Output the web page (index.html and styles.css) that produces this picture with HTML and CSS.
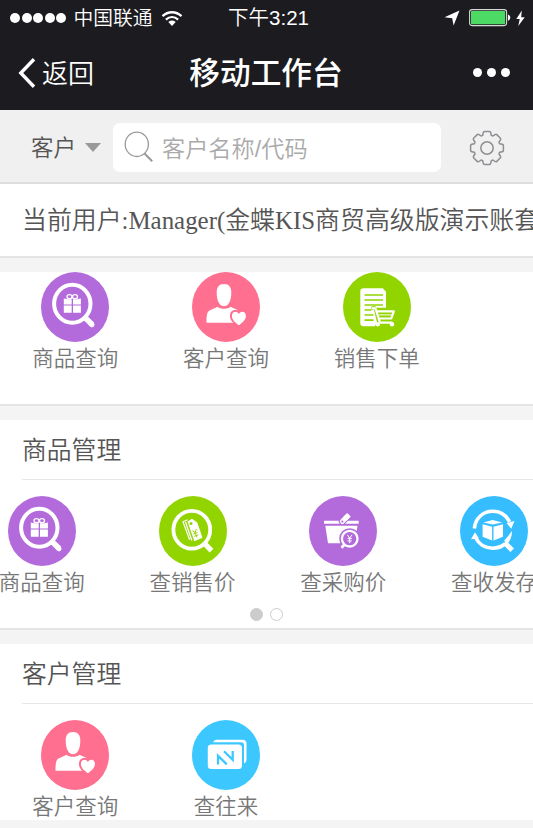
FILE: index.html
```
<!DOCTYPE html>
<html lang="zh-CN">
<head>
  <meta charset="UTF-8" />
  <meta name="viewport" content="width=device-width, initial-scale=1" />
  <title>移动工作台</title>
  <link rel="stylesheet" href="styles.css">
</head>
<body>
  <!-- Icon sprites -->
  <svg class="sprites" width="0" height="0">
    <symbol id="icon-goods" viewBox="0 0 68 70">
      <ellipse cx="34" cy="35" rx="34" ry="35" fill="#b36adb"/>
      <ellipse cx="31.3" cy="31.8" rx="18.2" ry="19" fill="none" stroke="#fff" stroke-width="4"/>
      <path d="M44 45.5l7.3 7.3" stroke="#fff" stroke-width="5.5"/>
      <path d="M50.5 52.2l.5.5" stroke="#fff" stroke-width="5" stroke-linecap="round"/>
      <path fill="#fff" d="M22.8 26.5l4 .7h3.9v5.2h-7.9zM32 27.2h4l3.9-.7v5.9H32zM22.8 33.4h7.9v7.4h-7.9zM32 33.4h7.9v7.4H32z"/>
      <g fill="none" stroke="#fff" stroke-width="1.3"><ellipse cx="28.5" cy="24.7" rx="2.5" ry="2"/><ellipse cx="34" cy="24.7" rx="2.5" ry="2"/></g>
    </symbol>
    <symbol id="icon-customer" viewBox="0 0 68 70">
      <ellipse cx="34" cy="35" rx="34" ry="35" fill="#ff6f8f"/>
      <path fill="#fff" d="M32 12c5 0 7.300 3.400 7.300 8.400 0 4.200-.6 8-2.600 11.200-1.200 2-2.700 2.700-4.700 2.700s-3.600-.7-4.700-2.700c-2-3.200-2.600-7-2.600-11.200C24.700 15.400 27 12 32 12z"/>
      <path fill="#fff" d="M14.500 50.800c0-7 .4-10.800 3-12.300 2.200-1.300 5-2 7.800-3.800 4 2.700 9.400 2.700 13.400 0 3 1.800 6 2.300 7.500 3.800v12.300z"/>
      <path fill="#fff" stroke="#ff6f8f" stroke-width="4" paint-order="stroke" d="M46.900 53.300c-4-2.800-7-5.600-7-9.200 0-4.800 5-5.600 7-2 2-3.600 7-2.800 7 2 0 3.600-3 6.400-7 9.200z"/>
    </symbol>
    <symbol id="icon-order" viewBox="0 0 68 70">
      <ellipse cx="34" cy="35" rx="34" ry="35" fill="#92d400"/>
      <path fill="#fff" d="M20.500 16.300h19.300l3.200 3.400v16H33.500l-1-1.500h-4v3.800h2.500l3 12-2 4.200H20.500q-3.200 0-3.200-3.200V19.500q0-3.200 3.200-3.200z"/>
      <path d="M21.500 23h18.500M21.500 28h18.500M21.500 33h18.500M21.500 38h7M21.500 43h9M21.500 48.200h9" stroke="#92d400" stroke-width="1.700"/>
      <path d="M29 36.300h3.500L37 50.600h12.500M34 39.300h16.800l-2.500 7.200H36" fill="none" stroke="#fff" stroke-width="2.200" stroke-linejoin="round"/>
      <path d="M36 42.900h13" stroke="#fff" stroke-width="1"/>
      <circle cx="34.700" cy="52.300" r="2.200" fill="#fff"/><circle cx="49" cy="52.300" r="2.200" fill="#fff"/>
    </symbol>
    <symbol id="icon-sale-price" viewBox="0 0 68 70">
      <ellipse cx="34" cy="35" rx="34" ry="35" fill="#92d400"/>
      <ellipse cx="32.800" cy="33.700" rx="18.400" ry="18.900" fill="none" stroke="#fff" stroke-width="3.800"/>
      <path d="M45.500 47.500l7 7.200" stroke="#fff" stroke-width="5.300"/>
      <path fill="#fff" d="M28.500 25.600l4.500-2.800 5.300 3.700 5.200 15.300-8.200 3.500z"/>
      <path d="M28.600 23.800l-4.600 2 6.600 18" fill="none" stroke="#fff" stroke-width="1.200"/>
      <path d="M26.500 26l6.300 18.500" stroke="#fff" stroke-width="1.300"/>
      <circle cx="32" cy="27.400" r="1.500" fill="#92d400"/>
      <path d="M33.300 34.600l2.900 2 1.100-3.500M36.200 36.600l1.800 4.900M34.400 38l4-1.400M35.200 40.300l4-1.400" fill="none" stroke="#92d400" stroke-width="1"/>
    </symbol>
    <symbol id="icon-buy-price" viewBox="0 0 68 70">
      <ellipse cx="34" cy="35" rx="34" ry="35" fill="#b36adb"/>
      <path fill="#fff" d="M15 24.700h34.700v3.100H15zM16.300 29.800h32.200l-1 6-8 8-7.500 3.500H19z"/>
      <path d="M33.300 25.500l6.300-6.500" stroke="#b36adb" stroke-width="7" stroke-linecap="round"/>
      <path d="M33.300 25.500l4.700-4.800" stroke="#fff" stroke-width="5" stroke-linecap="round"/>
      <path d="M36 22.800l4-4.100" stroke="#fff" stroke-width="5"/>
      <circle cx="33.300" cy="25.600" r="1.100" fill="#b36adb"/>
      <circle cx="40.700" cy="42.700" r="10.500" fill="#b36adb"/>
      <circle cx="40.700" cy="42.700" r="7.800" fill="none" stroke="#fff" stroke-width="2.300"/>
      <path d="M35.500 48.500l-3 3.200" stroke="#fff" stroke-width="2.800"/>
      <path d="M38.300 38.700l2.400 3.500 2.400-3.500M40.700 42v5.200M38.600 42.600h4.200M38.600 44.900h4.200" fill="none" stroke="#fff" stroke-width="1"/>
    </symbol>
    <symbol id="icon-stock" viewBox="0 0 68 70">
      <ellipse cx="34" cy="35" rx="34" ry="35" fill="#35bdff"/>
      <path d="M14.300 32.500C15.500 22 23 15.300 32.700 15.300c7.500 0 13.500 4 17 10.500M15.800 42c3 6.200 9.500 10.200 17 10.200 5 0 9-1.700 12-4.200" fill="none" stroke="#fff" stroke-width="3.600"/>
      <path fill="#fff" d="M46.500 27l8-2-3.300 7.800zM11 43.300l4-7 4 6.300zM51.800 35c.4 5.500-1.300 9.500-4.300 12.500l-3.500-2.700c3-3 5-6 7.800-9.800z"/>
      <path d="M44.500 46.500l7.700 7.700" stroke="#fff" stroke-width="5"/>
      <path fill="#fff" d="M23.300 26.400l9.400-2.500 9.600 2.500-9.600 2.200zM22.600 28.300l9.500 2.500v13.600l-9.500-3.700zM43 28.300l-9.500 2.500v13.600l9.500-3.700z"/>
    </symbol>
    <symbol id="icon-account" viewBox="0 0 68 70">
      <ellipse cx="34" cy="35" rx="34" ry="35" fill="#3cc8ff"/>
      <path fill="#fff" d="M21 22.300q1-2.600 3.500-2.600h26q4 0 4 4V40q0 2.500-2.500 3.500V25.300q0-3-3-3z"/>
      <rect x="15.800" y="24.600" width="34.200" height="24.500" rx="3.500" fill="#fff"/>
      <path d="M26 44.500v-8.700l8.800 8.500M32 31.300l8.700 8.500v-8.700" fill="none" stroke="#3cc8ff" stroke-width="2.300"/>
    </symbol>
  </svg>

  <header>
    <div class="status-bar">
      <div class="carrier">
        <span class="signal"><i></i><i></i><i></i><i></i><i></i></span>
        <span>中国联通</span>
        <svg class="wifi" width="22" height="17" viewBox="0 0 22 17" fill="none" stroke="#fff" stroke-width="2.300">
          <path d="M1.500 6.200c5.500-5.300 13.500-5.300 19 0M4.900 9.700c3.700-3.400 8.500-3.400 12.200 0"/>
          <path d="M7.300 12c2.300-1.900 5.100-1.900 7.400 0L11 16z" fill="#fff" stroke="none"/>
        </svg>
      </div>
      <div class="time">下午3:21</div>
      <div class="power">
        <svg width="16" height="16" viewBox="0 0 16 16"><path fill="#fff" d="M15.500.5L9.600 15.500 8.200 8.200.5 7.200z"/></svg>
        <svg class="battery" width="42" height="18" viewBox="0 0 42 18">
          <rect x=".6" y=".6" width="37" height="16" rx="2.500" fill="none" stroke="#d8d8d8" stroke-width="1.100"/>
          <rect x="2" y="2" width="34.200" height="13.200" rx="1" fill="#4cd964"/>
          <path d="M39 5.500q2.300.8 2.300 3.100T39 11.700z" fill="#fff"/>
        </svg>
        <svg width="9" height="17" viewBox="0 0 9 17"><path fill="#fff" d="M5.800.5L.3 9h3.400L2.300 16 8.700 7.200H5.200z"/></svg>
      </div>
    </div>
    <div class="nav-bar">
      <a class="back">
        <svg width="18" height="32" viewBox="0 0 18 32"><path d="M16 2.200L2.800 16 16 29.800" fill="none" stroke="#fff" stroke-width="3.400"/></svg>
        <span>返回</span>
      </a>
      <h1>移动工作台</h1>
      <span class="more"><i></i><i></i><i></i></span>
    </div>
  </header>

  <div class="search-bar">
    <div class="search-type">客户 <span class="caret"></span></div>
    <div class="search-box">
      <svg width="30" height="32" viewBox="0 0 30 32" fill="none" stroke="#999">
        <ellipse cx="12.800" cy="13.300" rx="11.600" ry="12.200" stroke-width="1.300"/>
        <path d="M20.500 22.500l7.700 7.700" stroke-width="2"/>
      </svg>
      <span>客户名称/代码</span>
    </div>
    <svg class="gear" width="36" height="36" viewBox="-18 -18 36 36" fill="none" stroke="#8e8e93" stroke-width="1.500" stroke-linejoin="round">
      <path d="M-4.300-12.600Q-3.900-16.400-2.500-16.400H2.500Q3.900-16.400 4.300-12.600L5.900-12Q8.800-14.400 9.800-13.400L13.400-9.800Q14.400-8.800 12-5.900L12.600-4.300Q16.400-3.900 16.400-2.500V2.500Q16.400 3.900 12.600 4.300L12 5.900Q14.400 8.800 13.400 9.800L9.800 13.400Q8.800 14.400 5.900 12L4.300 12.600Q3.900 16.400 2.500 16.400H-2.500Q-3.900 16.400-4.300 12.600L-5.900 12Q-8.800 14.400-9.800 13.400L-13.400 9.800Q-14.400 8.800-12 5.900L-12.600 4.300Q-16.400 3.900-16.400 2.500V-2.500Q-16.400-3.900-12.600-4.300L-12-5.900Q-14.400-8.800-13.400-9.800L-9.800-13.400Q-8.800-14.400-5.900-12z"/>
      <circle r="6.200"/>
    </svg>
  </div>

  <div class="user">当前用户:Manager(金蝶KIS商贸高级版演示账套)</div>

  <section class="card quick">
    <div class="items">
      <div class="item"><svg><use href="#icon-goods"/></svg><span>商品查询</span></div>
      <div class="item"><svg><use href="#icon-customer"/></svg><span>客户查询</span></div>
      <div class="item"><svg><use href="#icon-order"/></svg><span>销售下单</span></div>
    </div>
  </section>

  <section class="card goods">
    <h2>商品管理</h2>
    <div class="items scrolled">
      <div class="item"><svg><use href="#icon-goods"/></svg><span>商品查询</span></div>
      <div class="item"><svg><use href="#icon-sale-price"/></svg><span>查销售价</span></div>
      <div class="item"><svg><use href="#icon-buy-price"/></svg><span>查采购价</span></div>
      <div class="item"><svg><use href="#icon-stock"/></svg><span>查收发存</span></div>
    </div>
    <div class="pager"><i class="active"></i><i></i></div>
  </section>

  <section class="card customers">
    <h2>客户管理</h2>
    <div class="items">
      <div class="item"><svg><use href="#icon-customer"/></svg><span>客户查询</span></div>
      <div class="item"><svg><use href="#icon-account"/></svg><span>查往来</span></div>
    </div>
  </section>
</body>
</html>
```
FILE: styles.css
```
* {
  box-sizing: border-box;
}
body {
  margin: 0;
  height: 828px;
  overflow: hidden;
  background: #f4f4f4;
  color: #555;
  font-family: "Liberation Sans", "Noto Sans CJK SC", sans-serif;
  font-weight: 350;
}
.sprites {
  display: block;
}
svg {
  flex: none;
}
header {
  height: 110px;
  background: #1c1b20;
  color: #fff;
}

/* status bar */
.status-bar {
  display: grid;
  grid-template-columns: 1fr auto 1fr;
  align-items: center;
  height: 36px;
  padding: 0 8px 0 10px;
  font-size: 19.8px;
  line-height: 36px;
}
.carrier, .power, .signal {
  display: flex;
  align-items: center;
}
.signal {
  gap: 1.6px;
  margin-right: 7px;
}
.signal i {
  width: 10px;
  height: 10px;
  border-radius: 50%;
  background: #fff;
}
.wifi {
  margin-left: 8px;
}
.time {
  padding-left: 2px;
  font-size: 20.5px;
}
.power {
  justify-content: flex-end;
  gap: 5px;
}
.battery {
  margin-left: 4px;
}

/* nav bar */
.nav-bar {
  display: grid;
  grid-template-columns: 1fr auto 1fr;
  align-items: center;
  height: 73px;
  padding: 0 23px 0 18px;
}
.back {
  display: flex;
  align-items: center;
  gap: 6px;
  font-size: 26px;
}
.back span {
  padding-bottom: 3px;
}
h1 {
  margin: 0;
  padding: 0 0 4px 4px;
  font-size: 30.7px;
  font-weight: 500;
}
.more {
  display: flex;
  justify-content: flex-end;
  gap: 5px;
}
.more i {
  width: 9px;
  height: 9px;
  border-radius: 50%;
  background: #fff;
}

/* search */
.search-bar {
  display: flex;
  align-items: center;
  height: 74px;
  padding: 2px 28px 0 31px;
  background: #f0f0f0;
  border-bottom: 2px solid #dedede;
}
.search-type {
  display: flex;
  align-items: center;
  gap: 9px;
  width: 82px;
  padding-bottom: 2px;
  font-size: 22.5px;
}
.caret {
  margin-top: 2px;
  border: 8px solid transparent;
  border-top: 9px solid #999;
  border-bottom: 0;
}
.search-box {
  display: flex;
  align-items: center;
  gap: 8px;
  width: 328px;
  height: 49px;
  padding-left: 11px;
  border-radius: 7px;
  background: #fff;
  color: #aaa;
  font-size: 23.2px;
}
.gear {
  margin: 2px 0 0 auto;
}
.user {
  height: 74px;
  padding-left: 22px;
  background: #fff;
  border-bottom: 2px solid #e4e4e4;
  font-family: "Liberation Serif", "Noto Sans CJK SC", serif;
  font-size: 24.9px;
  line-height: 74px;
  white-space: nowrap;
  overflow: hidden;
}

/* cards */
.card {
  background: #fff;
  border-bottom: 2px solid #e4e4e4;
  overflow: hidden;
}
.quick {
  height: 134px;
  margin-top: 14px;
}
.goods {
  height: 210px;
  margin-top: 14px;
}
.customers {
  height: 176px;
  margin-top: 14px;
  border-bottom: 0;
}
h2 {
  height: 60px;
  margin: 0 0 16px 22px;
  border-bottom: 1px solid #e6e6e6;
  font-size: 24.8px;
  font-weight: 350;
  line-height: 61px;
}
.items {
  display: flex;
}
.scrolled {
  margin-left: -33.5px;
}
.item {
  display: flex;
  flex: none;
  flex-direction: column;
  align-items: center;
  width: 150.7px;
  color: #777;
  font-size: 21.5px;
  line-height: 34px;
}
.item svg {
  width: 68px;
  height: 70px;
}
.pager {
  display: flex;
  justify-content: center;
  gap: 7px;
  padding-top: 8px;
}
.pager i {
  width: 13px;
  height: 13px;
  border: 1.5px solid #ccc;
  border-radius: 50%;
}
.pager .active {
  background: #ccc;
}
```
